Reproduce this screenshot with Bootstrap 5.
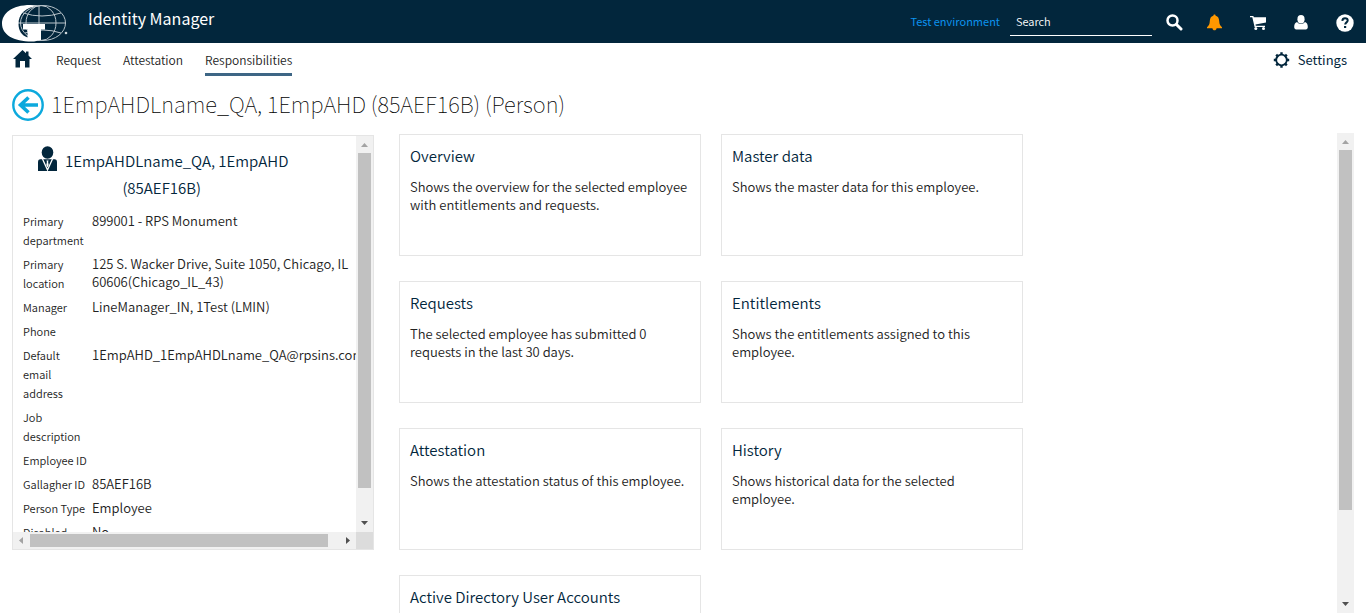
<!DOCTYPE html>
<html lang="en">
<head>
<meta charset="utf-8">
<meta name="viewport" content="width=device-width, initial-scale=1">
<title>Identity Manager</title>
<link href="https://cdn.jsdelivr.net/npm/bootstrap@5.3.0/dist/css/bootstrap.min.css" rel="stylesheet">
<style>
  :root { --navy: #02263c; --line: #e5e5e5; }
  body { font-family: "Noto Sans CJK SC", "Open Sans", sans-serif; font-size: 13px; line-height: 18px; color: #222; font-weight: 350; }
  a { color: inherit; text-decoration: none; }
  svg { display: block; flex: none; }
  .topbar { background: var(--navy); color: #fff; height: 43px; }
  .brand-name { font-size: 16px; line-height: 24px; margin: 0 0 8px 20px; font-weight: 400; }
  .env { color: #0c93ef; font-size: 11px; font-weight: 400; margin-bottom: 2px; }
  .search-box { width: 142px; height: 28px; background: none; border: 0; border-bottom: 1px solid #fff; border-radius: 0; color: #fff; font-size: 11px; font-weight: 350; padding: 0 6px; margin: 0 14px 0 10px; outline: 0; }
  .search-box::placeholder { color: #fff; opacity: 1; }
  .icon-row { gap: 24px; padding: 2px 12px 0 0; }
  .icon-btn { background: none; border: 0; padding: 0; color: #fff; }
  .icon-btn.cart { margin-left: 4px; }
  .icon-btn.account { margin: 0 4px; }
  .menu { height: 34px; padding: 0 19px 0 13px; }
  .home { margin-bottom: 2px; }
  .menu-links { gap: 22px; margin-left: 24px; font-size: 12px; }
  .menu-links a { line-height: 27px; border-bottom: 3px solid transparent; margin-top: 2px; }
  .menu-links a.active { border-color: #3e6685; }
  .settings { gap: 8px; font-size: 13px; color: var(--navy); font-weight: 400; }
  .page-head { padding: 11px 12px 8px; gap: 7px; }
  .page-head h1 { font-size: 22px; line-height: 30px; font-weight: 100; margin: 0 0 4px; color: #000; }
  .work { min-height: 0; padding: 3px 12px 0; }
  .person { width: 362px; height: 415px; border: 1px solid var(--line); margin-top: 2px; }
  .person-body { min-width: 0; padding: 8px 0 0 10px; }
  .person-name { font-size: 15px; line-height: 27px; font-weight: 350; color: var(--navy); margin: 3px 0 0; }
  .person-head { gap: 8px; padding-left: 14px; margin-bottom: 11px; }
  .person-name span { margin-right: 30px; }
  .facts { table-layout: fixed; width: 346px; }
  .facts th { width: 69px; font-weight: 350; font-size: 11px; line-height: 19px; padding: 0 4px 5px 0; vertical-align: top; }
  .facts td { padding: 0 12px 0 0; vertical-align: top; }
  .facts .wide { white-space: nowrap; }
  .vbar { width: 17px; background: #f1f1f1; flex: none; }
  .hbar { height: 17px; background: #f1f1f1; flex: none; }
  .corner { width: 17px; background: #dcdcdc; }
  .thumb { background: #c1c1c1; }
  .vbar .thumb { margin: 0 2px; }
  .hbar .thumb { margin: 2px 0; }
  .arrow-end { width: 17px; height: 17px; flex: none; }
  .tiles { display: grid; grid-template-columns: repeat(2, 302px); grid-auto-rows: 122px; gap: 25px 20px; margin: 1px 0 0 25px; }
  .tile { border: 1px solid var(--line); padding: 10px 10px; display: block; }
  .tile h2 { font-size: 15px; line-height: 22px; font-weight: 350; color: var(--navy); margin: 0 0 11px; }
  .tile p { margin: 0; }
</style>
</head>
<body class="vh-100 overflow-hidden d-flex flex-column">
<header class="topbar d-flex align-items-center flex-shrink-0">
  <svg width="68" height="43" viewBox="0 0 68 43" role="img" aria-label="Gallagher">
    <g fill="none" stroke="#b9c4cb" stroke-width="1">
      <ellipse cx="43" cy="23" rx="22.500" ry="17.500"/>
      <ellipse cx="41" cy="23" rx="15" ry="17.500"/>
      <path d="M39 5v36M18 23h48M23 13q19 6 38 0M25 33q18-6 36 0"/>
    </g>
    <path fill="#fff" d="M39 5.500C15 2.500 2 12 2 23.500 2 35 14 42 34 41.500l7-1.500V29.500h4V24H23v5.500h4.500v8c-6-2-9-7-9-13.500C18.500 14 25 7.500 39 5.500z"/>
    <circle cx="66" cy="33" r="1.300" fill="#cdd5da"/>
  </svg>
  <div class="brand-name">Identity Manager</div>
  <div class="ms-auto d-flex align-items-center">
    <a class="env" href="#">Test environment</a>
    <input class="search-box" type="text" placeholder="Search" aria-label="Search">
    <div class="icon-row d-flex align-items-center">
      <button class="icon-btn" aria-label="Search"><svg width="17" height="17" viewBox="0 0 17 17" fill="none" stroke="#fff"><circle cx="6.500" cy="6.500" r="5" stroke-width="2.500"/><path d="M10.500 10.500l4.500 4.500" stroke-width="3" stroke-linecap="round"/></svg></button>
      <button class="icon-btn" aria-label="Notifications"><svg width="15" height="17" viewBox="0 0 16 17" fill="#ff9800"><path d="M8 0c.8 0 1.200.5 1.200 1.300C12 2 12.800 4 13 7c.2 3.500 1 5.200 3 6.500V14.500H0v-1C2 12.200 2.800 10.500 3 7c.2-3 1-5 3.800-5.700C6.800.5 7.200 0 8 0zM5.800 14.500h4.400C10 16 9.200 16.700 8 16.700S6 16 5.800 14.500z"/></svg></button>
      <button class="icon-btn cart" aria-label="Cart"><svg width="16" height="15" viewBox="0 0 16 15" fill="#fff"><path d="M0 1h3.400l.4 1.300H16v5.200L5.500 9.400l.3 1.300H15V12H4.600L2.300 2.300H0z"/><circle cx="5.800" cy="13.400" r="1.500"/><circle cx="13.500" cy="13.400" r="1.500"/></svg></button>
      <button class="icon-btn account" aria-label="Account"><svg width="14" height="15" viewBox="0 0 14 15" fill="#fff"><ellipse cx="7" cy="4.300" rx="3.600" ry="4.200"/><path d="M3 7c1 1.300 2.300 2 4 2s3-.7 4-2c2 .5 2.800 2.500 2.800 5 0 1.500-.8 2.400-2 2.400H2.200C1 14.400.2 13.500.2 12 .2 9.500 1 7.500 3 7z"/></svg></button>
      <button class="icon-btn" aria-label="Help"><svg width="18" height="18" viewBox="0 0 18 18"><circle cx="9" cy="9" r="8.700" fill="#fff"/><path d="M6.300 6.800C6.500 5 7.500 4.200 9 4.200s2.700.9 2.700 2.300c0 1.800-2.500 2-2.500 4" fill="none" stroke="#02263c" stroke-width="2"/><path d="M8 12h2.200v2H8z" fill="#02263c"/></svg></button>
    </div>
  </div>
</header>
<nav class="menu d-flex align-items-center flex-shrink-0">
  <a href="#" class="home" aria-label="Home"><svg width="19" height="18" viewBox="0 0 19 18" fill="#02263c"><path d="M9.500 0l3.500 3.200V1.500h2.500v4L19 9h-2.500v8.500H12V11H7v6.500H2.500V9H0z"/></svg></a>
  <div class="menu-links d-flex">
    <a href="#">Request</a><a href="#">Attestation</a><a href="#" class="active">Responsibilities</a>
  </div>
  <a href="#" class="settings ms-auto d-flex align-items-center">
    <svg width="17" height="16" viewBox="0 0 17 16" fill="none" stroke="#02263c"><circle cx="8.500" cy="8" r="5.300" stroke-width="1.800"/><path d="M8.500 2.500V.3M8.500 13.500v2.200M3 8H.8M14 8h2.200M4.600 4.100L3.200 2.700M12.400 11.900l1.400 1.400M4.600 11.900l-1.400 1.400M12.400 4.100l1.400-1.400" stroke-width="2.400"/></svg>
    Settings</a>
</nav>
<div class="page-head d-flex align-items-center flex-shrink-0">
  <button class="icon-btn" aria-label="Back"><svg width="32" height="32" viewBox="0 0 32 32" fill="none" stroke="#0ca9dd"><circle cx="16" cy="16" r="14.700" stroke-width="2.400"/><path d="M26 16H9M16.500 8.500L8.500 16l8 7.500" stroke-width="3.600"/></svg></button>
  <h1>1EmpAHDLname_QA, 1EmpAHD (85AEF16B) (Person)</h1>
</div>
<main class="work d-flex flex-grow-1 overflow-hidden">
  <section class="person d-flex flex-column flex-shrink-0">
    <div class="d-flex flex-grow-1 overflow-hidden">
      <div class="person-body flex-grow-1 overflow-hidden">
        <div class="person-head d-flex align-items-start">
          <svg width="20" height="30" viewBox="0 0 20 30" fill="#02263c"><ellipse cx="10.500" cy="8.500" rx="5.800" ry="6.200"/><path d="M1 27V17.500q0-2 2-2.200h15q2 .2 2 2.200V27z"/><path d="M5.500 15l5 11 5-11" fill="none" stroke="#fff" stroke-width="1.300"/><path d="M9.500 16.500h2l-.4 1.500.6 3-1.200 2.500L9.300 21l.6-3z" fill="#fff"/></svg>
          <h2 class="person-name text-center">1EmpAHDLname_QA, 1EmpAHD<br><span>(85AEF16B)</span></h2>
        </div>
        <table class="facts">
          <tr><th scope="row">Primary department</th><td>899001 - RPS Monument</td></tr>
          <tr><th scope="row">Primary location</th><td>125 S. Wacker Drive, Suite 1050, Chicago, IL 60606(Chicago_IL_43)</td></tr>
          <tr><th scope="row">Manager</th><td>LineManager_IN, 1Test (LMIN)</td></tr>
          <tr><th scope="row">Phone</th><td></td></tr>
          <tr><th scope="row">Default email address</th><td class="wide">1EmpAHD_1EmpAHDLname_QA@rpsins.com</td></tr>
          <tr><th scope="row">Job description</th><td></td></tr>
          <tr><th scope="row">Employee ID</th><td></td></tr>
          <tr><th scope="row">Gallagher ID</th><td>85AEF16B</td></tr>
          <tr><th scope="row">Person Type</th><td>Employee</td></tr>
          <tr><th scope="row">Disabled</th><td>No</td></tr>
        </table>
      </div>
      <div class="vbar d-flex flex-column">
        <svg class="arrow-end" viewBox="0 0 17 17"><path d="M5 11h7L8.500 7z" fill="#a3a3a3"/></svg>
        <div class="thumb" style="height:335px"></div>
        <svg class="arrow-end mt-auto" viewBox="0 0 17 17"><path d="M5 6h7l-3.500 4z" fill="#505050"/></svg>
      </div>
    </div>
    <div class="hbar d-flex">
      <svg class="arrow-end" viewBox="0 0 17 17"><path d="M10 5v7L6 8.500z" fill="#a3a3a3"/></svg>
      <div class="thumb" style="width:298px"></div>
      <svg class="arrow-end ms-auto" viewBox="0 0 17 17"><path d="M7 5v7l4-3.500z" fill="#505050"/></svg>
      <div class="corner"></div>
    </div>
  </section>
  <div class="tiles">
    <a class="tile" href="#"><h2>Overview</h2><p>Shows the overview for the selected employee with entitlements and requests.</p></a>
    <a class="tile" href="#"><h2>Master data</h2><p>Shows the master data for this employee.</p></a>
    <a class="tile" href="#"><h2>Requests</h2><p>The selected employee has submitted 0 requests in the last 30 days.</p></a>
    <a class="tile" href="#"><h2>Entitlements</h2><p>Shows the entitlements assigned to this employee.</p></a>
    <a class="tile" href="#"><h2>Attestation</h2><p>Shows the attestation status of this employee.</p></a>
    <a class="tile" href="#"><h2>History</h2><p>Shows historical data for the selected employee.</p></a>
    <a class="tile" href="#"><h2>Active Directory User Accounts</h2></a>
  </div>
  <div class="vbar ms-auto d-flex flex-column">
    <svg class="arrow-end" viewBox="0 0 17 17"><path d="M5 11h7L8.500 7z" fill="#a3a3a3"/></svg>
    <div class="thumb" style="height:360px"></div>
    <svg class="arrow-end mt-auto" viewBox="0 0 17 17"><path d="M5 6h7l-3.500 4z" fill="#505050"/></svg>
  </div>
</main>
<script src="https://cdn.jsdelivr.net/npm/bootstrap@5.3.0/dist/js/bootstrap.bundle.min.js"></script>
</body>
</html>
